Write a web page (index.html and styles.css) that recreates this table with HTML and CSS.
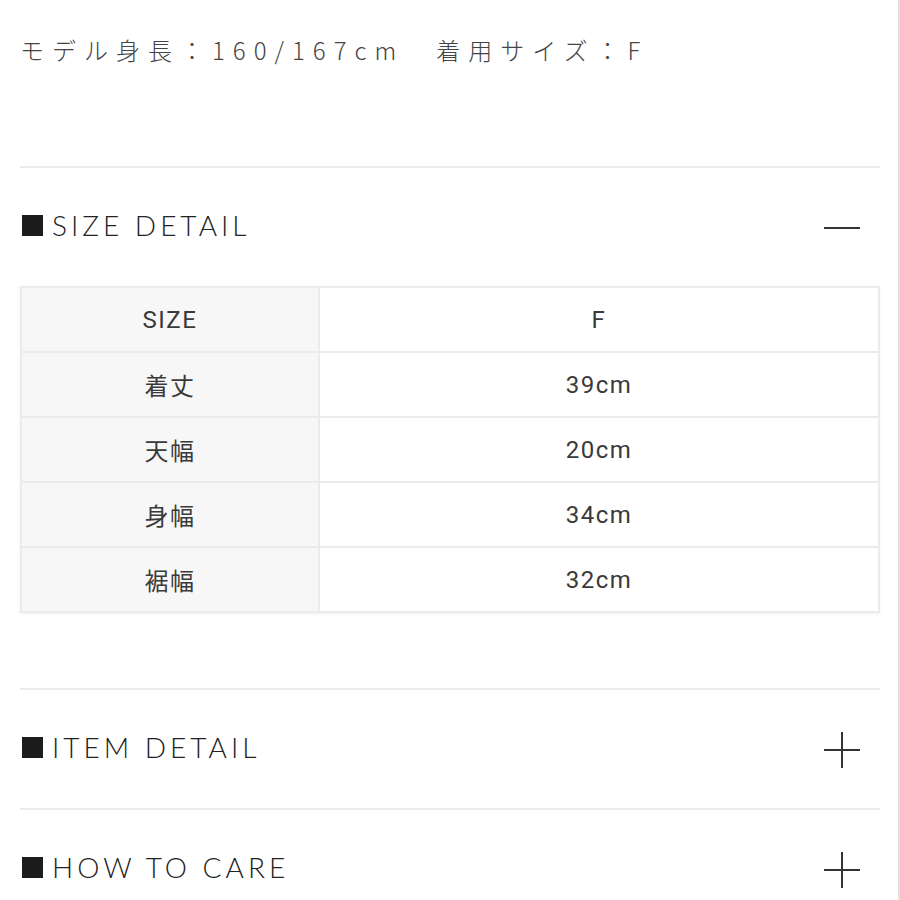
FILE: index.html
```html
<!DOCTYPE html>
<html lang="ja">
<head>
    <meta charset="UTF-8">
    <meta name="viewport" content="width=device-width, initial-scale=1.0">
    <title>SIZE DETAIL</title>
    <link rel="stylesheet" href="styles.css">
</head>
<body>
    <div class="page">
        <p class="model-info">モデル身長：160/167cm　着用サイズ：F</p>

        <section class="accordion open">
            <div class="acc-head">
                <h2><span class="mark"></span>SIZE DETAIL</h2>
                <span class="toggle minus"></span>
            </div>
            <table class="size-table">
                <tr><th>SIZE</th><td>F</td></tr>
                <tr><th>着丈</th><td>39cm</td></tr>
                <tr><th>天幅</th><td>20cm</td></tr>
                <tr><th>身幅</th><td>34cm</td></tr>
                <tr><th>裾幅</th><td>32cm</td></tr>
            </table>
        </section>

        <section class="accordion">
            <div class="acc-head">
                <h2><span class="mark"></span>ITEM DETAIL</h2>
                <span class="toggle plus"></span>
            </div>
        </section>

        <section class="accordion">
            <div class="acc-head">
                <h2><span class="mark"></span>HOW TO CARE</h2>
                <span class="toggle plus"></span>
            </div>
        </section>
    </div>
</body>
</html>
```

FILE: styles.css
```css
body {
    margin: 0;
    padding: 0;
    background-color: #fff;
    color: #333;
    font-family: Roboto, "Noto Sans CJK JP", sans-serif;
}

.page {
    width: 900px;
    min-height: 900px;
    box-sizing: border-box;
    padding: 0 18px 0 20px;
    border-right: 2px solid #e2e2e2;
}

.model-info {
    margin: 0;
    padding: 33px 0 99px;
    font-family: "Noto Sans CJK JP", sans-serif;
    font-weight: 300;
    font-size: 24px;
    line-height: 34px;
    letter-spacing: 8px;
    color: #444;
    white-space: nowrap;
}

.accordion {
    border-top: 2px solid #ebebeb;
    width: 860px;
}

.acc-head {
    height: 118px;
    display: flex;
    align-items: center;
    justify-content: space-between;
}

.acc-head h2 {
    margin: 0 0 4px;
    display: flex;
    align-items: center;
    font-family: Lato, sans-serif;
    font-weight: 300;
    font-size: 28px;
    letter-spacing: 4px;
    color: #222;
}

.mark {
    display: inline-block;
    width: 21px;
    height: 21px;
    background-color: #1c1c1c;
    margin: 0 9px 0 2px;
}

.toggle {
    position: relative;
    width: 36px;
    height: 36px;
    margin-right: 20px;
}

.toggle::before,
.toggle::after {
    content: "";
    position: absolute;
    background-color: #333;
}

.toggle::before {
    left: 0;
    right: 0;
    top: 18px;
    height: 2px;
}

.plus::after {
    top: 1px;
    bottom: -1px;
    left: 17px;
    width: 2px;
}

.size-table {
    width: 860px;
    border-collapse: collapse;
    margin-bottom: 75px;
    box-shadow: 0 1px 3px rgba(0, 0, 0, 0.06);
}

.size-table th,
.size-table td {
    border: 2px solid #ebebeb;
    height: 63px;
    padding: 0;
    text-align: center;
    font-weight: 400;
    font-size: 24px;
    letter-spacing: 1.5px;
    color: #3a3a3a;
}

.size-table th {
    width: 296px;
    background-color: #f7f7f7;
}

.size-table td {
    background-color: #fff;
}
```
